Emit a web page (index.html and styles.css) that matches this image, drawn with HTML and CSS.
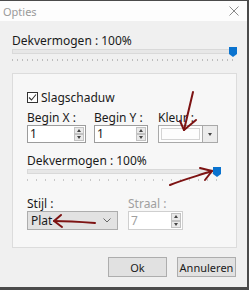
FILE: index.html
```html
<!doctype html>
<html lang="nl">
<head>
    <meta name="viewport" content="width=device-width, initial-scale=1" charset="utf-8">
    <title>Opties</title>
    <link rel="stylesheet" href="styles.css">
</head>
<body>
  <div class="window">
    <div class="titlebar">
      <span class="title">Opties</span>
      <svg class="close" width="10" height="10" viewBox="0 0 10 10"><path d="M0.5 0.5 L9.5 9.5 M9.5 0.5 L0.5 9.5" stroke="#8a8a8a" stroke-width="1" fill="none"/></svg>
    </div>
    <div class="content">
      <div class="label top-label">Dekvermogen : 100%</div>
      <div class="slider">
        <div class="track"></div>
        <div class="thumb"></div>
      </div>
      <div class="ticks fine"></div>

      <div class="group">
        <label class="check-row">
          <span class="checkbox">
            <svg width="9" height="9" viewBox="0 0 9 9"><path d="M1 4.5 L3.5 7 L8 1.5" stroke="#333" stroke-width="1.1" fill="none"/></svg>
          </span>
          <span>Slagschaduw</span>
        </label>

        <div class="row">
          <div class="field w-x">
            <div class="label">Begin X :</div>
            <div class="spin">
              <span class="value">1</span>
              <span class="spin-btns"><i class="up"></i><i class="down"></i></span>
            </div>
          </div>
          <div class="field w-y">
            <div class="label">Begin Y :</div>
            <div class="spin">
              <span class="value">1</span>
              <span class="spin-btns"><i class="up"></i><i class="down"></i></span>
            </div>
          </div>
          <div class="field w-kleur">
            <div class="label">Kleur :</div>
            <div class="colorbox">
              <span class="swatch"></span>
              <span class="drop"><i class="down"></i></span>
            </div>
          </div>
        </div>

        <div class="label second-label">Dekvermogen : 100%</div>
        <div class="slider inner">
          <div class="track"></div>
          <div class="thumb"></div>
        </div>
        <div class="ticks wide"></div>

        <div class="row style-row">
          <div class="field w-stijl">
            <div class="label">Stijl :</div>
            <div class="combo">
              <span>Plat</span>
              <svg width="8" height="5" viewBox="0 0 8 5"><path d="M0.5 0.5 L4 4 L7.5 0.5" stroke="#666" fill="none"/></svg>
            </div>
          </div>
          <div class="field w-straal disabled">
            <div class="label">Straal :</div>
            <div class="spin">
              <span class="value">7</span>
              <span class="spin-btns"><i class="up"></i><i class="down"></i></span>
            </div>
          </div>
        </div>
      </div>

      <div class="buttons">
        <button class="btn">Ok</button>
        <button class="btn">Annuleren</button>
      </div>
    </div>

    <!-- red annotation arrows drawn over the dialog -->
    <svg class="arrows" width="249" height="290" viewBox="0 0 249 290">
      <g stroke="#7d1313" stroke-width="2" fill="none" stroke-linecap="round" stroke-linejoin="round">
        <path d="M193 92 C190 105 187 117 184 130"/>
        <path d="M180 121 L184 130 L196 120"/>
        <path d="M170 185 C182 180 197 176 212 171"/>
        <path d="M200 168 L212 171 L205 180"/>
        <path d="M95 223 C82 222 68 221 54 221"/>
        <path d="M61 215 L54 221 L62 227"/>
      </g>
    </svg>
  </div>
</body>
</html>
```

FILE: styles.css
```css
  :root {
  --font-face: "Noto Sans", "Open Sans", Arial, sans-serif;
  }
  body {
  margin: 0;
  background-color: #4b4b4b;
  font-family: var(--font-face);
  font-size: 12px;
  color: #1a1a1a;
  }

  .window {
  position: relative;
  width: 247px;
  height: 286px;
  margin-top: 1px;
  background-color: #f0f0f0;
  overflow: hidden;
  }

  .titlebar {
  height: 20px;
  background-color: #fdfdfd;
  display: flex;
  align-items: center;
  justify-content: space-between;
  padding: 0 8px 0 3px;
  }

  .title {
  color: #9a9a9a;
  font-size: 11px;
  }

  .content {
  padding: 13px 10px 0 12px;
  }

  .label {
  line-height: 14px;
  height: 14px;
  white-space: nowrap;
  }

  .slider {
  position: relative;
  height: 10px;
  margin-top: -1px;
  padding-top: 2px;
  box-sizing: border-box;
  }

  .track {
  height: 3px;
  margin-right: 6px;
  background-color: #e7e7e7;
  border: 1px solid #d9d9d9;
  }

  .thumb {
  position: absolute;
  right: 0;
  top: 0;
  width: 8px;
  height: 10px;
  background-color: #0a73cf;
  clip-path: polygon(0 0, 100% 0, 100% 70%, 50% 100%, 0 70%);
  }

  .ticks {
  height: 2px;
  margin-top: 2px;
  }

  .ticks.fine {
  background: repeating-linear-gradient(90deg, #bdbdbd 0 1px, transparent 1px 5px);
  margin-right: 4px;
  }

  .ticks.wide {
  background: repeating-linear-gradient(90deg, #c8c8c8 0 1px, transparent 1px 9px);
  width: 192px;
  }

  .group {
  box-sizing: border-box;
  margin-top: 12px;
  height: 175px;
  border: 1px solid #dcdcdc;
  background-color: #f7f7f7;
  padding: 16px 14px 0 14px;
  }

  .check-row {
  display: flex;
  align-items: center;
  gap: 3px;
  height: 14px;
  }

  .checkbox {
  width: 9px;
  height: 9px;
  border: 1px solid #333;
  background-color: #fff;
  display: flex;
  }

  .row {
  display: flex;
  margin-top: 7px;
  }

  .w-x { width: 59px; }
  .w-y { width: 54px; margin-left: 8px; }
  .w-kleur { width: 60px; margin-left: 10px; }

  .spin {
  box-sizing: border-box;
  height: 18px;
  border: 1px solid #9c9c9c;
  background-color: #fff;
  display: flex;
  justify-content: space-between;
  }

  .spin .value {
  padding-left: 2px;
  line-height: 16px;
  }

  .spin-btns {
  width: 10px;
  display: flex;
  flex-direction: column;
  margin: 1px;
  }

  .spin-btns i {
  flex: 1;
  display: flex;
  align-items: center;
  justify-content: center;
  background-color: #e9e9e9;
  border: 1px solid #c2c2c2;
  }

  .spin-btns i::after,
  .drop i::after {
  content: "";
  border-left: 2px solid transparent;
  border-right: 2px solid transparent;
  }

  .up::after {
  border-bottom: 3px solid #444;
  }

  .down::after {
  border-top: 3px solid #444;
  }

  .colorbox {
  box-sizing: border-box;
  height: 18px;
  border: 1px solid #a9a9a9;
  background-color: #fdfdfd;
  display: flex;
  }

  .swatch {
  flex: 1;
  margin: 2px;
  border: 1px solid #d4d4d4;
  }

  .drop {
  width: 14px;
  border-left: 1px solid #a9a9a9;
  background-color: #ececec;
  display: flex;
  }

  .drop i {
  flex: 1;
  display: flex;
  align-items: center;
  justify-content: center;
  }

  .second-label {
  margin-top: 11px;
  }

  .slider.inner {
  width: 194px;
  }

  .style-row {
  margin-top: 17px;
  }

  .style-row .label {
  height: 13px;
  line-height: 11px;
  }

  .w-stijl { width: 91px; }
  .w-straal { width: 55px; margin-left: 10px; }

  .combo {
  box-sizing: border-box;
  height: 19px;
  border: 1px solid #adadad;
  background-color: #e2e2e2;
  display: flex;
  align-items: center;
  justify-content: space-between;
  padding: 0 6px 0 3px;
  }

  .style-row .spin {
  height: 19px;
  }

  .style-row .spin .value {
  line-height: 18px;
  }

  .disabled .label,
  .disabled .value {
  color: #a0a0a0;
  }

  .disabled .spin {
  border-color: #cfcfcf;
  }

  .buttons {
  display: flex;
  justify-content: flex-end;
  gap: 10px;
  margin-top: 9px;
  padding-right: 1px;
  }

  .btn {
  font-family: var(--font-face);
  font-size: 11px;
  color: #1a1a1a;
  height: 20px;
  width: 59px;
  padding: 0;
  background-color: #e1e1e1;
  border: 1px solid #adadad;
  }

  .arrows {
  position: absolute;
  left: 0;
  top: -1px;
  pointer-events: none;
  }
```
